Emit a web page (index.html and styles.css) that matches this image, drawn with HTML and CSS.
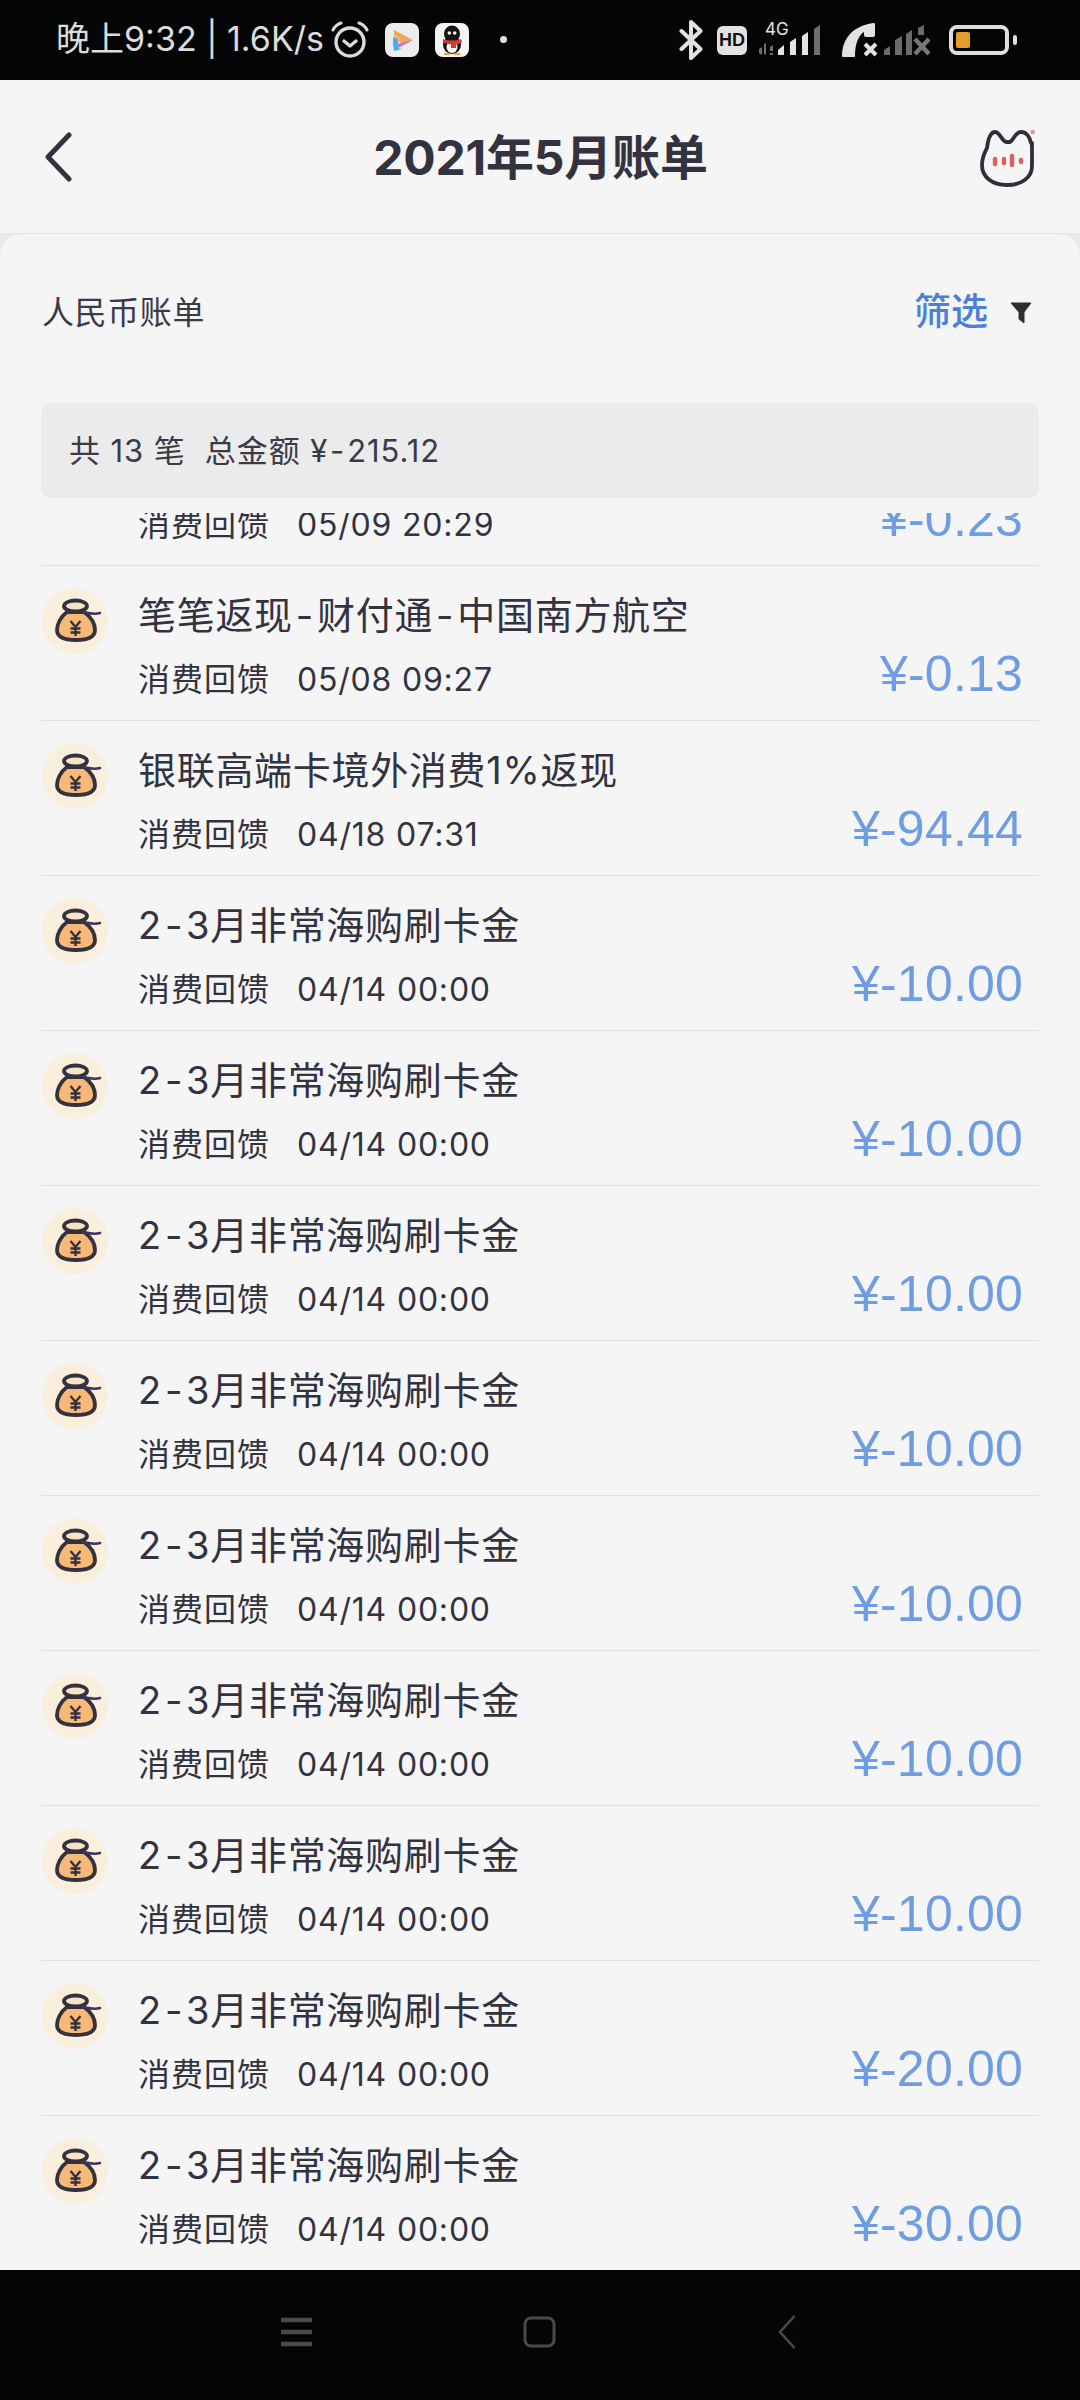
FILE: index.html
```html
<!DOCTYPE html>
<html lang="zh-CN">
<head>
<meta charset="utf-8">
<title>2021年5月账单</title>
<link rel="stylesheet" href="styles.css">
</head>
<body>
<svg class="defs" width="0" height="0" aria-hidden="true">
  <symbol id="bag" viewBox="0 0 66 66">
    <circle cx="33" cy="33" r="33" fill="#faeedd"/>
    <path d="M25 24C18 29 15 37 15 42c0 7 7 10 19 10s19-3 19-10c0-6-4-13-11-18z" fill="#f7b978" stroke="#34323e" stroke-width="3.800" stroke-linejoin="round"/>
    <ellipse cx="33.500" cy="18" rx="11.500" ry="5.500" fill="#f9e3c6" stroke="#34323e" stroke-width="3.800"/>
    <path d="M41 24c5 1 11 3 17 1" fill="none" stroke="#3b3560" stroke-width="2.600" stroke-linecap="round"/>
    <path d="M28.500 33l5 6 5-6M33.500 39v9M28.500 40.500h10M28.500 44.500h10" fill="none" stroke="#34323e" stroke-width="2.400"/>
  </symbol>
</svg>

<div class="phone">
  <header class="statusbar">
    <span class="status-text">晚上9:32 | 1.6K/s</span>
    <svg class="i-alarm" viewBox="0 0 38 38" width="38" height="38">
      <circle cx="19" cy="21" r="14" fill="none" stroke="#dcdcdc" stroke-width="3.400"/>
      <path d="M13 20l6 5 6-5" fill="none" stroke="#dcdcdc" stroke-width="3.400" stroke-linecap="round" stroke-linejoin="round"/>
      <path d="M2 9c2-4 5-6 8-7M36 9c-2-4-5-6-8-7" fill="none" stroke="#dcdcdc" stroke-width="3" stroke-linecap="round"/>
    </svg>
    <svg class="i-app i-video" viewBox="0 0 34 34" width="34" height="34">
      <rect width="34" height="34" rx="8" fill="#ececef"/>
      <path d="M9 7l19 10-8 4.500-11-5z" fill="#f0a656"/>
      <path d="M9 7v4l8 5-8 5z" fill="#f0b878"/>
      <path d="M28 17l-11 6-8 4 3-6z" fill="#ae7fe0"/>
      <path d="M8 14l5 2v9l4 1-8 2c-1-4-1-10-1-14z" fill="#46b0ee"/>
    </svg>
    <svg class="i-app i-qq" viewBox="0 0 34 34" width="34" height="34">
      <rect width="34" height="34" rx="8" fill="#f5f5f5"/>
      <ellipse cx="17" cy="22" rx="9" ry="9" fill="#141414"/>
      <ellipse cx="17" cy="11" rx="8" ry="8.500" fill="#141414"/>
      <ellipse cx="17" cy="24" rx="5.500" ry="6" fill="#f4f4f4"/>
      <circle cx="14.300" cy="10" r="1.800" fill="#f4f4f4"/>
      <circle cx="19.700" cy="10" r="1.800" fill="#f4f4f4"/>
      <path d="M8 16c5 2 13 2 18 0l1 3c-2 1.500-4 2-6 2.500V25h-5v-3.500c-3-.5-6-1.500-8-2.500z" fill="#d93a35"/>
      <ellipse cx="12" cy="31" rx="3.500" ry="1.200" fill="#e8a93a"/>
      <ellipse cx="22" cy="31" rx="3.500" ry="1.200" fill="#e8a93a"/>
    </svg>
    <span class="dot"></span>
    <span class="status-space"></span>
    <svg class="i-bt" viewBox="0 0 24 40" width="24" height="40">
      <path d="M2.500 11l19 18L12 38V2l9.500 9-19 18" fill="none" stroke="#e2e2e2" stroke-width="4" stroke-linejoin="round" stroke-linecap="round"/>
    </svg>
    <span class="hd">HD</span>
    <span class="net">
      <span class="net-4g">4G</span>
      <svg viewBox="0 0 67 32" width="67" height="32">
        <path d="M0 24l3-2v8l-3-2zM5 19l2-1v12l-2-1zM11 22l3-2v6h-3zM11 28h3v2h-3z" fill="#6f6f6f"/>
        <path d="M19 30v-5l6-5v10zM31 30V17l6-4v17zM43 30V11l6-4v23z" fill="#e4e4e4"/>
        <path d="M55 30V4l6-4v30z" fill="#6f6f6f"/>
      </svg>
    </span>
    <svg class="i-call" viewBox="0 0 40 34" width="40" height="34">
      <path d="M1 33c0-14 7-25 20-30 5-2 10-3 12-3 1 0 1 1 1 2v10c0 1-1 2-2 2h-7c-1 0-2-1-2-2V9c-5 3-9 11-9 24 0 1-1 1-2 1H3c-1 0-2 0-2-1z" fill="#e2e2e2"/>
      <path d="M24 21l11 11M35 21L24 32" stroke="#e2e2e2" stroke-width="4" fill="none"/>
    </svg>
    <svg class="i-sim" viewBox="0 0 46 32" width="46" height="32">
      <path d="M0 30v-5l6-4v9zM11 30V15l7-4v19zM22 30V9l6-4v25zM34 10V3l6-3v10z" fill="#6b6b6b"/>
      <path d="M31 14l14 15M45 14L31 29" stroke="#777" stroke-width="4.400" fill="none"/>
    </svg>
    <span class="battery"><span class="battery-fill"></span></span>
    <span class="battery-tip"></span>
  </header>

  <nav class="topbar">
    <svg class="back" viewBox="0 0 30 52" width="30" height="52">
      <path d="M25 3L4 25l21 22" fill="none" stroke="#33323f" stroke-width="5" stroke-linecap="round" stroke-linejoin="round"/>
    </svg>
    <h1 class="title">2021年5月账单</h1>
    <svg class="cat" viewBox="0 0 58 60" width="58" height="60">
      <path d="M53 15v23c0 12-11 19-25 19C13 57 3 49 3 37c0-8 3-13 5-17 1-8 3-16 8-16s6 8 11 10h4c4-2 5-10 11-10s9 6 10 11" fill="none" stroke="#2f2e3b" stroke-width="3.800" stroke-linecap="round" stroke-linejoin="round"/>
      <path d="M16 31v5M25 31v4M33 28v9M42 32v2" stroke="#d9605f" stroke-width="4.400" stroke-linecap="round"/>
      <circle cx="53.700" cy="4" r="2.200" fill="#ec8f8a"/>
    </svg>
  </nav>

  <main class="sheet">
    <div class="sheet-inner">
      <div class="filter-row">
        <span class="currency">人民币账单</span>
        <span class="filter">
          <span class="filter-text">筛选</span>
          <svg viewBox="0 0 22 22" width="22" height="22"><path d="M1 1h20l-7 9v11l-5-4v-7z" fill="#2f2f33" stroke="#2f2f33" stroke-linejoin="round"/></svg>
        </span>
      </div>
      <div class="summary">共 13 笔&nbsp;&nbsp;总金额 ¥<span class="sum-hy">-</span>215.12</div>
      <div class="list">
        <div class="row row-first">
          <svg class="row-icon" width="66" height="66"><use href="#bag"/></svg>
          <div class="row-text"><div class="row-title">&nbsp;</div><div class="row-sub"><span>消费回馈</span><span class="row-date">05/09 20:29</span></div></div>
          <div class="row-amount">¥-0.23</div>
        </div>
        <div class="row">
          <svg class="row-icon" width="66" height="66"><use href="#bag"/></svg>
          <div class="row-text"><div class="row-title">笔笔返现<span class="hy">-</span>财付通<span class="hy">-</span>中国南方航空</div><div class="row-sub"><span>消费回馈</span><span class="row-date">05/08 09:27</span></div></div>
          <div class="row-amount">¥-0.13</div>
        </div>
        <div class="row">
          <svg class="row-icon" width="66" height="66"><use href="#bag"/></svg>
          <div class="row-text"><div class="row-title">银联高端卡境外消费1%返现</div><div class="row-sub"><span>消费回馈</span><span class="row-date">04/18 07:31</span></div></div>
          <div class="row-amount">¥-94.44</div>
        </div>
        <div class="row">
          <svg class="row-icon" width="66" height="66"><use href="#bag"/></svg>
          <div class="row-text"><div class="row-title">2<span class="hy">-</span>3月非常海购刷卡金</div><div class="row-sub"><span>消费回馈</span><span class="row-date">04/14 00:00</span></div></div>
          <div class="row-amount">¥-10.00</div>
        </div>
        <div class="row">
          <svg class="row-icon" width="66" height="66"><use href="#bag"/></svg>
          <div class="row-text"><div class="row-title">2<span class="hy">-</span>3月非常海购刷卡金</div><div class="row-sub"><span>消费回馈</span><span class="row-date">04/14 00:00</span></div></div>
          <div class="row-amount">¥-10.00</div>
        </div>
        <div class="row">
          <svg class="row-icon" width="66" height="66"><use href="#bag"/></svg>
          <div class="row-text"><div class="row-title">2<span class="hy">-</span>3月非常海购刷卡金</div><div class="row-sub"><span>消费回馈</span><span class="row-date">04/14 00:00</span></div></div>
          <div class="row-amount">¥-10.00</div>
        </div>
        <div class="row">
          <svg class="row-icon" width="66" height="66"><use href="#bag"/></svg>
          <div class="row-text"><div class="row-title">2<span class="hy">-</span>3月非常海购刷卡金</div><div class="row-sub"><span>消费回馈</span><span class="row-date">04/14 00:00</span></div></div>
          <div class="row-amount">¥-10.00</div>
        </div>
        <div class="row">
          <svg class="row-icon" width="66" height="66"><use href="#bag"/></svg>
          <div class="row-text"><div class="row-title">2<span class="hy">-</span>3月非常海购刷卡金</div><div class="row-sub"><span>消费回馈</span><span class="row-date">04/14 00:00</span></div></div>
          <div class="row-amount">¥-10.00</div>
        </div>
        <div class="row">
          <svg class="row-icon" width="66" height="66"><use href="#bag"/></svg>
          <div class="row-text"><div class="row-title">2<span class="hy">-</span>3月非常海购刷卡金</div><div class="row-sub"><span>消费回馈</span><span class="row-date">04/14 00:00</span></div></div>
          <div class="row-amount">¥-10.00</div>
        </div>
        <div class="row">
          <svg class="row-icon" width="66" height="66"><use href="#bag"/></svg>
          <div class="row-text"><div class="row-title">2<span class="hy">-</span>3月非常海购刷卡金</div><div class="row-sub"><span>消费回馈</span><span class="row-date">04/14 00:00</span></div></div>
          <div class="row-amount">¥-10.00</div>
        </div>
        <div class="row">
          <svg class="row-icon" width="66" height="66"><use href="#bag"/></svg>
          <div class="row-text"><div class="row-title">2<span class="hy">-</span>3月非常海购刷卡金</div><div class="row-sub"><span>消费回馈</span><span class="row-date">04/14 00:00</span></div></div>
          <div class="row-amount">¥-20.00</div>
        </div>
        <div class="row">
          <svg class="row-icon" width="66" height="66"><use href="#bag"/></svg>
          <div class="row-text"><div class="row-title">2<span class="hy">-</span>3月非常海购刷卡金</div><div class="row-sub"><span>消费回馈</span><span class="row-date">04/14 00:00</span></div></div>
          <div class="row-amount">¥-30.00</div>
        </div>
      </div>
    </div>
  </main>

  <footer class="navbar">
    <svg class="nav-menu" viewBox="0 0 31 30" width="31" height="30"><path d="M0 3h31M0 15h31M0 27h31" stroke="#4a4a4a" stroke-width="4.500"/></svg>
    <svg class="nav-home" viewBox="0 0 33 32" width="33" height="32"><rect x="2" y="2" width="29" height="28" rx="6" fill="none" stroke="#4a4a4a" stroke-width="3"/></svg>
    <svg class="nav-back" viewBox="0 0 18 34" width="18" height="34"><path d="M16.500 1L2 17l14.500 16" fill="none" stroke="#4a4a4a" stroke-width="2.500"/></svg>
  </footer>
</div>
</body>
</html>
```

FILE: styles.css
```css
* { box-sizing: border-box; }
html, body { margin: 0; padding: 0; }
body {
  width: 1080px;
  height: 2400px;
  overflow: hidden;
  background: #050505;
  font-family: "Inter", "Noto Sans CJK SC", sans-serif;
  color: #33323f;
}
.defs { display: block; height: 0; }
.phone { display: flex; flex-direction: column; width: 1080px; height: 2400px; }

/* status bar */
.statusbar {
  flex: 0 0 80px;
  display: flex;
  align-items: center;
  padding-left: 56px;
  background: #050505;
  color: #dcdcdc;
}
.status-text { font-size: 34px; line-height: 40px; white-space: pre; width: 275px; margin-top: -2px; letter-spacing: 0; }
.i-alarm { margin-right: 16px; }
.i-app { margin-right: 16px; }
.dot { width: 7px; height: 7px; border-radius: 50%; background: #e0e0e0; margin-left: 15px; margin-top: -2px; }
.status-space { flex: 1; }
.i-bt { margin-right: 14px; margin-left: -2px; }
.hd {
  width: 30px; height: 29px;
  margin-right: 12px;
  border-radius: 6px;
  background: #e2e2e2;
  color: #111;
  font: 700 18px/29px "Liberation Sans", sans-serif;
  text-align: center;
}
.net { position: relative; width: 67px; height: 32px; margin-right: 15px; margin-top: 2px; }
.net svg { display: block; }
.net-4g { position: absolute; left: 6px; top: -4px; font-size: 17px; line-height: 17px; color: #e2e2e2; }
.i-call { margin-right: 3px; }
.i-sim { margin-right: 19px; margin-top: 2px; }
.battery {
  display: flex;
  align-items: center;
  width: 60px; height: 30px;
  padding-left: 3px;
  border: 4px solid #dedede;
  border-radius: 8px;
}
.battery-fill { width: 14px; height: 16px; border-radius: 2px; background: #e59d2a; }
.battery-tip { width: 4px; height: 10px; margin-left: 4px; margin-right: 63px; border-radius: 2px; background: #dedede; }

/* title bar */
.topbar {
  flex: 0 0 154px;
  display: grid;
  grid-template-columns: 1fr auto 1fr;
  align-items: center;
  padding: 0 43px 0 44px;
  background: #f5f5f5;
  border-bottom: 1px solid #e4e4e4;
}
.back { margin-top: 3px; }
.title {
  margin: 2px 0 0;
  font-size: 48px;
  line-height: 60px;
  font-weight: 700;
  text-align: center;
  color: #33323f;
  letter-spacing: -.2px;
}
.cat { justify-self: end; margin-top: 2px; }

/* sheet */
.sheet { flex: 1; min-height: 0; background: #e9e9e9; }
.sheet-inner {
  display: flex;
  flex-direction: column;
  height: 100%;
  padding: 0 41px;
  background: #f5f5f5;
  border-radius: 22px 22px 0 0;
}
.filter-row {
  flex: 0 0 169px;
  display: flex;
  justify-content: space-between;
  align-items: flex-start;
  padding-top: 57px;
}
.currency { font-size: 32px; line-height: 46px; letter-spacing: .6px; color: #3b3a46; margin-left: 1px; margin-top: -1px; }
.filter { display: flex; align-items: center; gap: 22px; margin-right: 7px; }
.filter-text { font-size: 37px; line-height: 46px; font-weight: 500; color: #4b7fd8; margin-top: -2px; }
.summary {
  flex: 0 0 95px;
  padding-left: 28px;
  border-radius: 10px;
  background: #ebebeb;
  font-size: 31px;
  line-height: 95px;
  letter-spacing: .9px;
  color: #3b3a46;
}
.sum-hy { margin: 0 2px; }
.list { flex: 1; min-height: 0; margin-top: 15px; overflow: hidden; }
.row {
  display: grid;
  grid-template-columns: 66px 1fr auto;
  column-gap: 31px;
  height: 155px;
  padding: 22px 16px 0 1px;
  border-bottom: 1px solid #e0e0e0;
}
.row-first { margin-top: -102px; }
.row-icon { display: block; }
.row-text { margin-top: 2px; margin-left: -1px; }
.row-title { font-size: 38px; line-height: 50px; white-space: nowrap; letter-spacing: .7px; color: #33323f; }
.hy { margin: 0 3px; }
.row-sub { display: flex; margin-top: 15px; font-size: 32px; line-height: 50px; letter-spacing: 1px; color: #33323f; }
.row-date { margin-left: 27px; letter-spacing: .8px; }
.row-amount {
  align-self: end;
  margin-bottom: 16px;
  font-family: "Liberation Sans", "Noto Sans CJK SC", sans-serif;
  font-size: 50px;
  line-height: 60px;
  letter-spacing: .2px;
  color: #6f9de2;
}

/* navigation bar */
.navbar {
  flex: 0 0 130px;
  display: flex;
  align-items: center;
  padding: 0 0 7px 281px;
  background: #050505;
}
.nav-menu { margin-right: 211px; }
.nav-home { margin-right: 222px; }
```
